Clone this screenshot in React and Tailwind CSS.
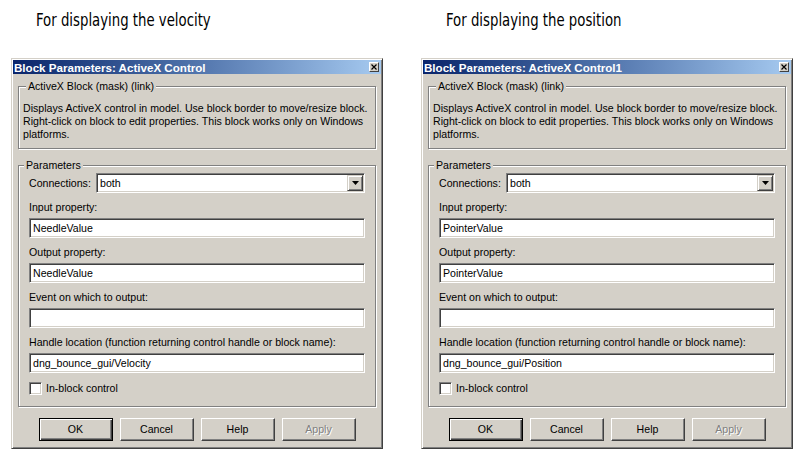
import React from "react";

const ui = { fontFamily: '"Liberation Sans", Arial, sans-serif' };

const Field = ({ value }) => (
  <div className="h-[20px] bg-white border border-t-[#808080] border-l-[#808080] border-b-white border-r-white shadow-[inset_1px_1px_0_#404040,inset_-1px_-1px_0_#d4d0c8] pl-[3px] flex items-center text-[10.6px] leading-[13px] text-black whitespace-nowrap">
    {value}
  </div>
);

const Label = ({ children }) => (
  <div className="h-[25px] pt-[8px] text-[10.6px] leading-[13px] whitespace-nowrap">
    {children}
  </div>
);

const Button = ({ children, primary, disabled }) => (
  <div
    className={`w-[74px] h-[23px] flex items-center justify-center text-[10.6px] bg-[#d4d0c8] ${
      primary
        ? "border border-black shadow-[inset_1px_1px_0_#fff,inset_-1px_-1px_0_#404040,inset_-2px_-2px_0_#808080]"
        : "border border-t-white border-l-white border-r-[#404040] border-b-[#404040] shadow-[inset_-1px_-1px_0_#808080]"
    } ${disabled ? "text-[#808080] [text-shadow:1px_1px_0_#fff]" : "text-black"}`}
  >
    {children}
  </div>
);

const Dialog = ({ title, prop, handle }) => (
  <div
    className="w-[372px] h-[391px] bg-[#d4d0c8] border border-t-[#d4d0c8] border-l-[#d4d0c8] border-r-[#404040] border-b-[#404040] shadow-[inset_1px_1px_0_#fff,inset_-1px_-1px_0_#808080] p-[1px] flex flex-col"
    style={ui}
  >
    <div className="h-[14px] bg-gradient-to-r from-[#0a246a] to-[#a6caf0] flex items-center justify-between pl-[1px] pr-[2px]">
      <span className="text-white font-bold text-[11.6px] leading-[13px] whitespace-nowrap">
        {title}
      </span>
      <div className="w-[10px] h-[10px] bg-[#d4d0c8] border border-t-white border-l-white border-r-[#404040] border-b-[#404040] flex items-center justify-center">
        <svg width="6" height="6" viewBox="0 0 6 6">
          <path d="M0.5 0.5 L5.5 5.5 M5.5 0.5 L0.5 5.5" stroke="#000" strokeWidth="1.2" />
        </svg>
      </div>
    </div>

    <fieldset className="mt-[6px] mx-[5px] border border-[#808080] shadow-[inset_1px_1px_0_#fff,1px_1px_0_#fff] px-[4px] pt-[9px] pb-[7px] min-w-0">
      <legend className="ml-[3px] px-[2px] bg-[#d4d0c8] text-[10.6px] leading-[13px] text-black">
        ActiveX Block (mask) (link)
      </legend>
      <div className="text-[10.6px] leading-[13px] text-black whitespace-nowrap">
        Displays ActiveX control in model. Use block border to move/resize block.
        <br />
        Right-click on block to edit properties. This block works only on Windows
        <br />
        platforms.
      </div>
    </fieldset>

    <fieldset className="mt-[10px] mx-[5px] border border-[#808080] shadow-[inset_1px_1px_0_#fff,1px_1px_0_#fff] px-[10px] pt-[1px] pb-[11px] min-w-0">
      <legend className="ml-[-5px] px-[2px] bg-[#d4d0c8] text-[10.6px] leading-[13px] text-black">
        Parameters
      </legend>
      <div className="flex items-center">
        <div className="w-[67px] text-[10.6px] leading-[13px] whitespace-nowrap">Connections:</div>
        <div className="flex-1 h-[20px] bg-white border border-t-[#808080] border-l-[#808080] border-b-white border-r-white shadow-[inset_1px_1px_0_#404040,inset_-1px_-1px_0_#d4d0c8] flex items-center pl-[3px] pr-[1px]">
          <span className="flex-1 text-[10.6px] leading-[13px]">both</span>
          <div className="w-[16px] h-[16px] bg-[#d4d0c8] border border-t-[#d4d0c8] border-l-[#d4d0c8] border-r-[#404040] border-b-[#404040] shadow-[inset_1px_1px_0_#fff,inset_-1px_-1px_0_#808080] flex items-center justify-center">
            <svg width="7" height="4" viewBox="0 0 7 4">
              <path d="M0 0 H7 L3.5 4 Z" fill="#000" />
            </svg>
          </div>
        </div>
      </div>
      <Label>Input property:</Label>
      <Field value={prop} />
      <Label>Output property:</Label>
      <Field value={prop} />
      <Label>Event on which to output:</Label>
      <Field value="" />
      <Label>Handle location (function returning control handle or block name):</Label>
      <Field value={handle} />
      <div className="mt-[9px] flex items-center">
        <div className="w-[13px] h-[13px] bg-white border border-t-[#808080] border-l-[#808080] border-b-white border-r-white shadow-[inset_1px_1px_0_#404040,inset_-1px_-1px_0_#d4d0c8]" />
        <span className="ml-[4px] text-[10.6px] leading-[13px]">In-block control</span>
      </div>
    </fieldset>

    <div className="mt-[11px] flex justify-center gap-[7px]">
      <Button primary>OK</Button>
      <Button>Cancel</Button>
      <Button>Help</Button>
      <Button disabled>Apply</Button>
    </div>
  </div>
);

const Column = ({ heading, children }) => (
  <div className="flex flex-col">
    <div className="h-[58px] pt-[10px] pl-[25px]">
      <div
        className="text-[18px] leading-[20px] text-black whitespace-nowrap origin-left scale-x-[0.82]"
        style={{ fontFamily: '"DejaVu Sans Condensed", "DejaVu Sans", sans-serif' }}
      >
        {heading}
      </div>
    </div>
    {children}
  </div>
);

export default function App() {
  return (
    <div className="w-[803px] h-[457px] bg-white flex pl-[11px] gap-[38px] overflow-hidden">
      <Column heading="For displaying the velocity">
        <Dialog
          title="Block Parameters: ActiveX Control"
          prop="NeedleValue"
          handle="dng_bounce_gui/Velocity"
        />
      </Column>
      <Column heading="For displaying the position">
        <Dialog
          title="Block Parameters: ActiveX Control1"
          prop="PointerValue"
          handle="dng_bounce_gui/Position"
        />
      </Column>
    </div>
  );
}
